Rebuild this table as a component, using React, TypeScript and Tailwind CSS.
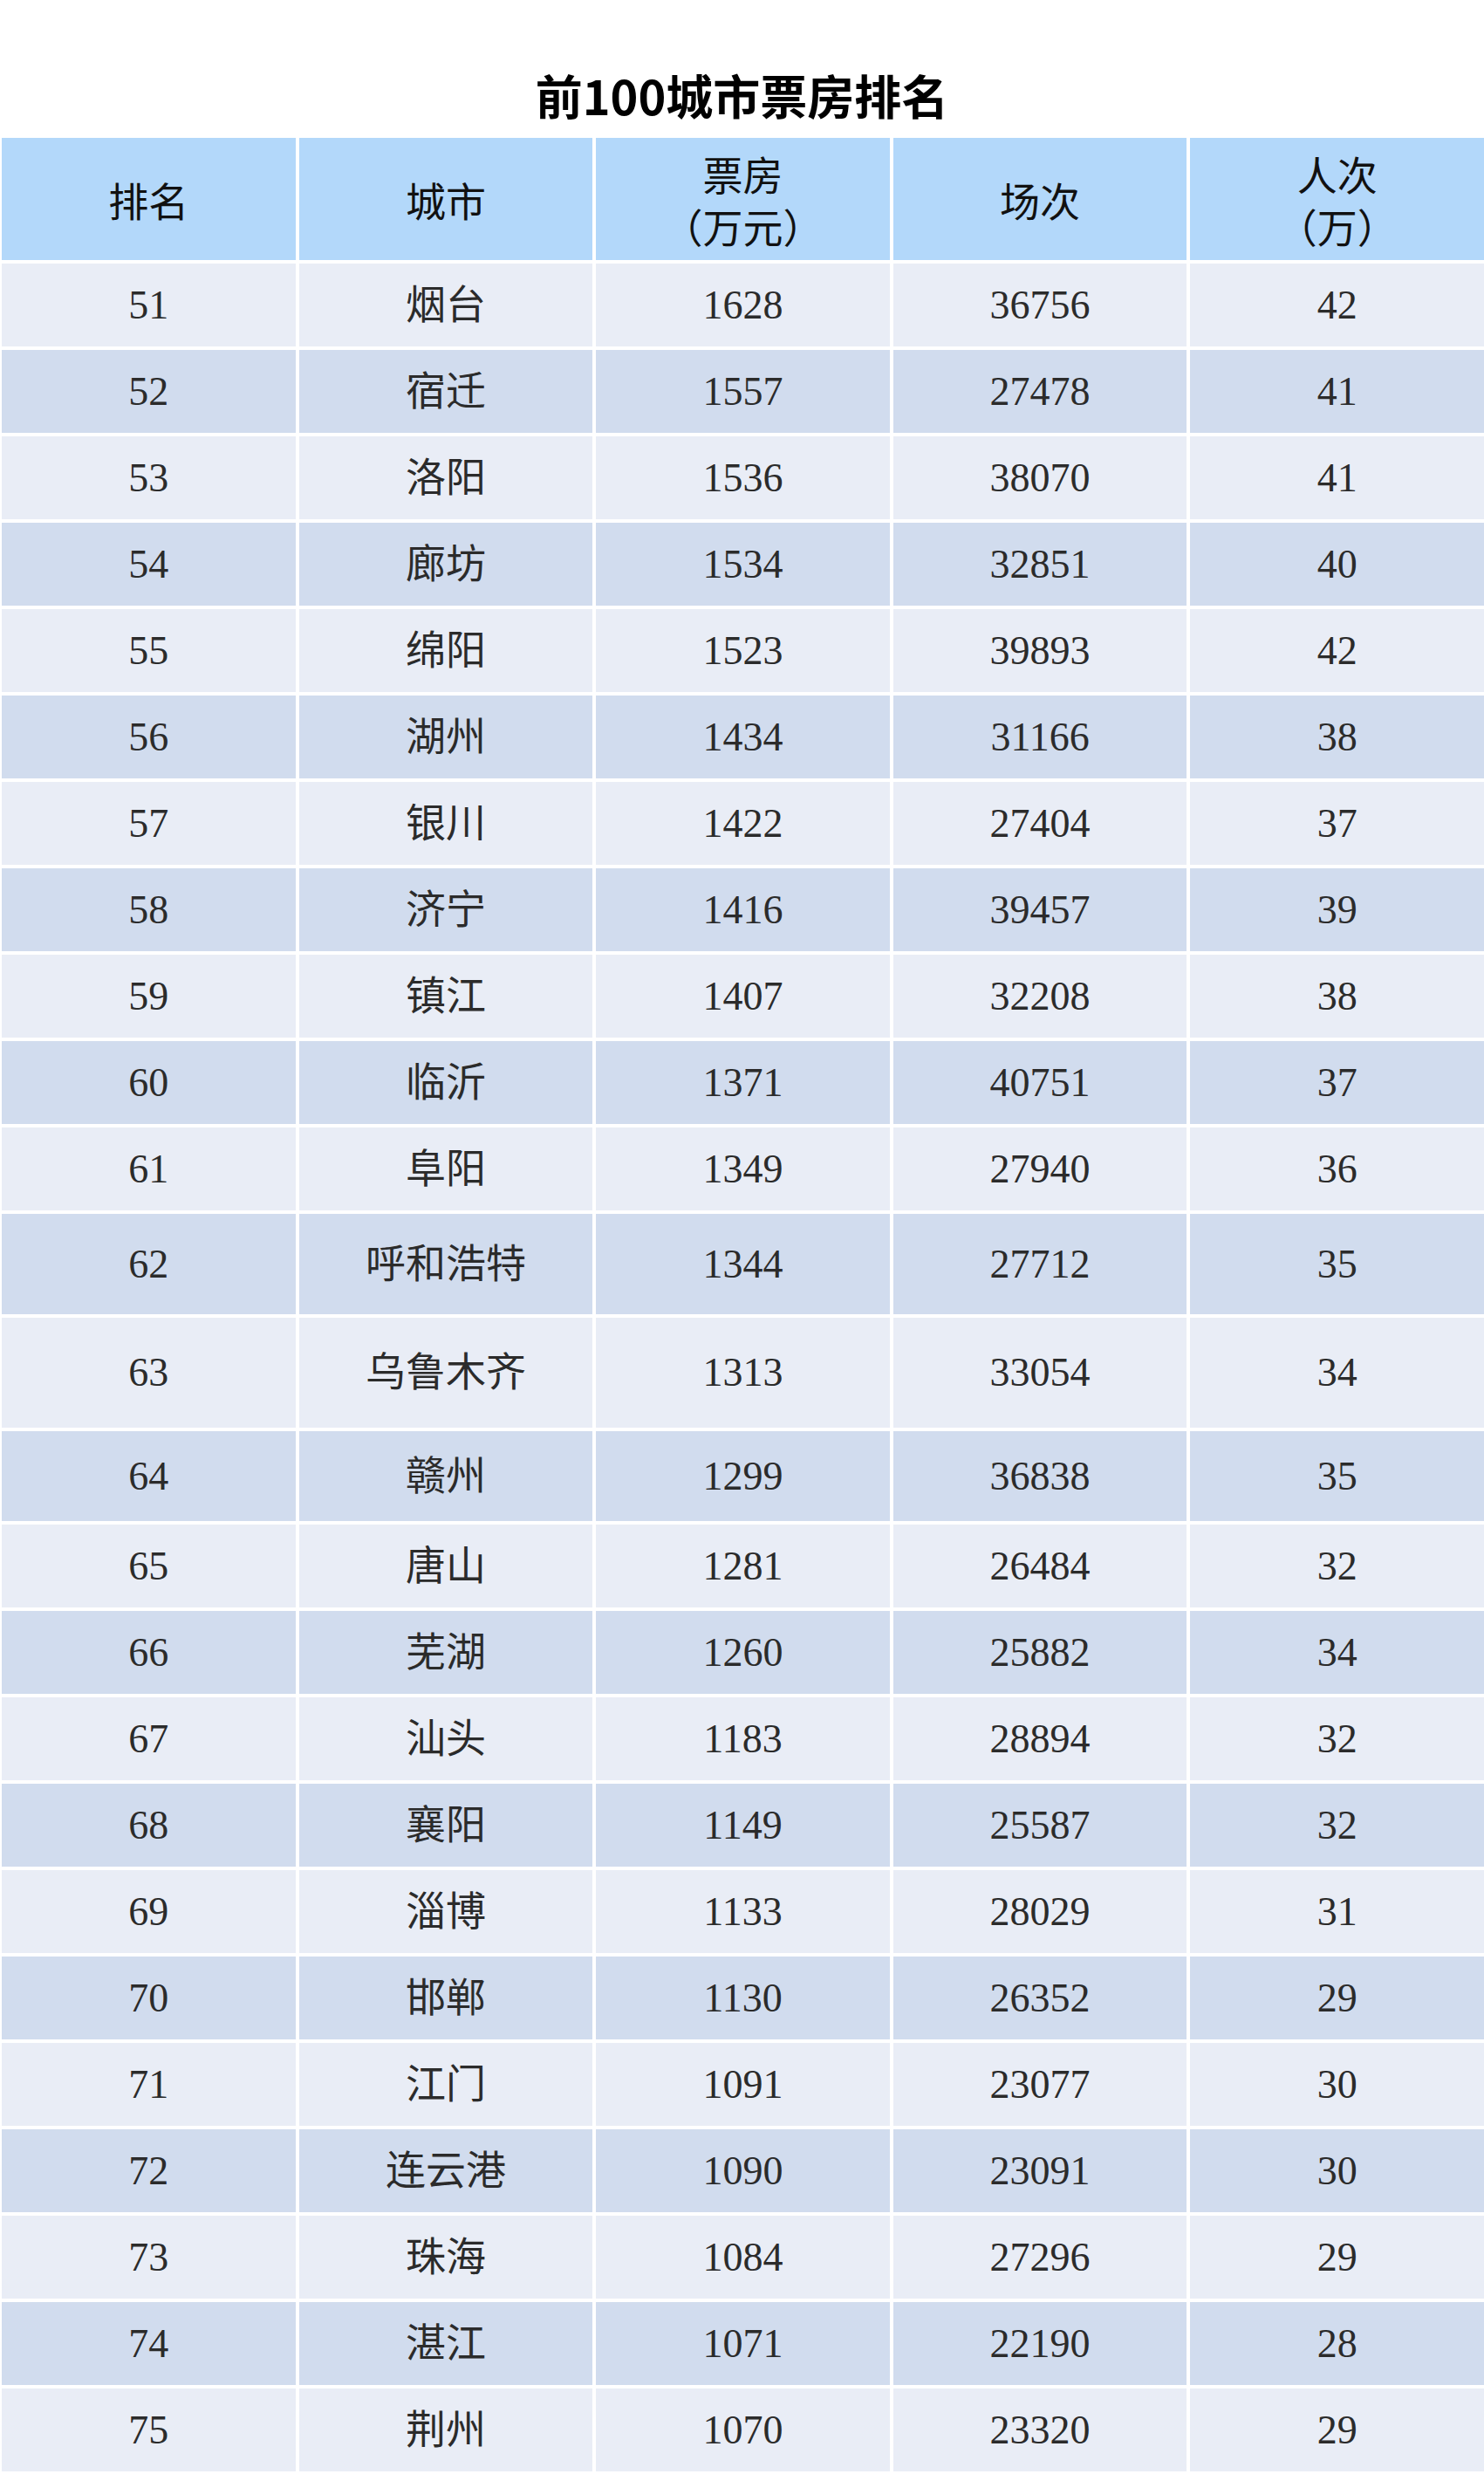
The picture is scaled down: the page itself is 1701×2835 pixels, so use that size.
type Row = {
  rank: number;
  city: string;
  box: number;
  shows: number;
  people: number;
  h: string;
};

const rows: Row[] = [
  { rank: 51, city: "烟台", box: 1628, shows: 36756, people: 42, h: "h-[95px]" },
  { rank: 52, city: "宿迁", box: 1557, shows: 27478, people: 41, h: "h-[95px]" },
  { rank: 53, city: "洛阳", box: 1536, shows: 38070, people: 41, h: "h-[95px]" },
  { rank: 54, city: "廊坊", box: 1534, shows: 32851, people: 40, h: "h-[95px]" },
  { rank: 55, city: "绵阳", box: 1523, shows: 39893, people: 42, h: "h-[95px]" },
  { rank: 56, city: "湖州", box: 1434, shows: 31166, people: 38, h: "h-[95px]" },
  { rank: 57, city: "银川", box: 1422, shows: 27404, people: 37, h: "h-[95px]" },
  { rank: 58, city: "济宁", box: 1416, shows: 39457, people: 39, h: "h-[95px]" },
  { rank: 59, city: "镇江", box: 1407, shows: 32208, people: 38, h: "h-[95px]" },
  { rank: 60, city: "临沂", box: 1371, shows: 40751, people: 37, h: "h-[95px]" },
  { rank: 61, city: "阜阳", box: 1349, shows: 27940, people: 36, h: "h-[95px]" },
  { rank: 62, city: "呼和浩特", box: 1344, shows: 27712, people: 35, h: "h-[115px]" },
  { rank: 63, city: "乌鲁木齐", box: 1313, shows: 33054, people: 34, h: "h-[126px]" },
  { rank: 64, city: "赣州", box: 1299, shows: 36838, people: 35, h: "h-[103px]" },
  { rank: 65, city: "唐山", box: 1281, shows: 26484, people: 32, h: "h-[95px]" },
  { rank: 66, city: "芜湖", box: 1260, shows: 25882, people: 34, h: "h-[95px]" },
  { rank: 67, city: "汕头", box: 1183, shows: 28894, people: 32, h: "h-[95px]" },
  { rank: 68, city: "襄阳", box: 1149, shows: 25587, people: 32, h: "h-[95px]" },
  { rank: 69, city: "淄博", box: 1133, shows: 28029, people: 31, h: "h-[95px]" },
  { rank: 70, city: "邯郸", box: 1130, shows: 26352, people: 29, h: "h-[95px]" },
  { rank: 71, city: "江门", box: 1091, shows: 23077, people: 30, h: "h-[95px]" },
  { rank: 72, city: "连云港", box: 1090, shows: 23091, people: 30, h: "h-[95px]" },
  { rank: 73, city: "珠海", box: 1084, shows: 27296, people: 29, h: "h-[95px]" },
  { rank: 74, city: "湛江", box: 1071, shows: 22190, people: 28, h: "h-[95px]" },
  { rank: 75, city: "荆州", box: 1070, shows: 23320, people: 29, h: "h-[95px]" },
];

const bodyFont =
  "font-['Liberation_Serif','Noto_Sans_CJK_SC',serif] text-[46px] leading-none";

function HeaderCell({ lines }: { lines: string[] }) {
  return (
    <div className="flex items-center justify-center bg-[#b3d8fa] text-[#111]">
      <div className="text-center font-['Noto_Sans_CJK_SC',sans-serif] text-[46px] leading-[60px] [text-spacing-trim:space-all]">
        {lines.map((line) => (
          <div key={line}>{line}</div>
        ))}
      </div>
    </div>
  );
}

export default function App() {
  return (
    <div className="min-h-[2835px] w-[1701px] bg-white">
      <div className="flex h-[158px] items-center justify-center pt-[60px]">
        <h1 className="font-['Noto_Sans_CJK_SC',sans-serif] text-[54px] font-bold leading-none text-black">
          前100城市票房排名
        </h1>
      </div>

      <div className="flex flex-col gap-[4px] pl-[2px]">
        <div className="grid h-[140px] grid-cols-5 gap-x-[4px]">
          <HeaderCell lines={["排名"]} />
          <HeaderCell lines={["城市"]} />
          <HeaderCell lines={["票房", "（万元）"]} />
          <HeaderCell lines={["场次"]} />
          <HeaderCell lines={["人次", "（万）"]} />
        </div>

        {rows.map((row, i) => {
          const bg = i % 2 === 0 ? "bg-[#e9edf6]" : "bg-[#d1dcee]";
          const cells = [row.rank, row.city, row.box, row.shows, row.people];
          return (
            <div key={row.rank} className={`grid grid-cols-5 gap-x-[4px] ${row.h}`}>
              {cells.map((value, j) => (
                <div
                  key={j}
                  className={`flex items-center justify-center text-[#2b2b2b] ${bg} ${bodyFont}`}
                >
                  {value}
                </div>
              ))}
            </div>
          );
        })}
      </div>
    </div>
  );
}
